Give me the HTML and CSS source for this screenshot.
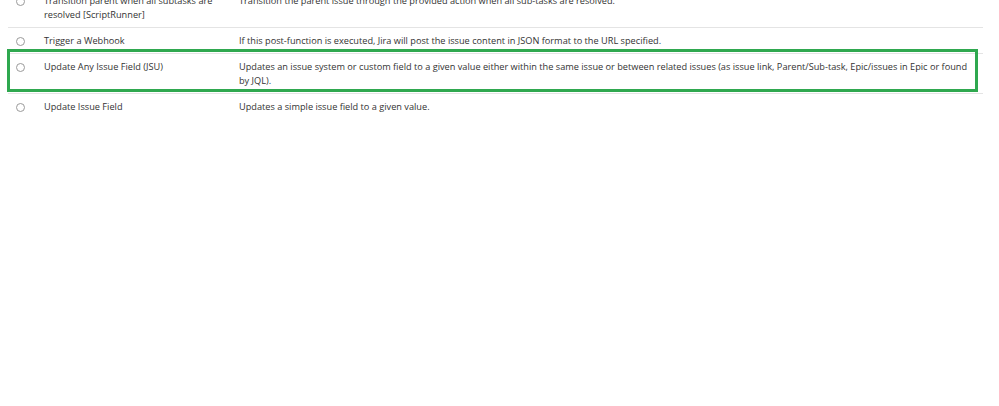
FILE: index.html
```html
<!DOCTYPE html>
<html lang="en">
<head>
  <meta charset="UTF-8" />
  <title>Post functions</title>
  <link rel="stylesheet" href="styles.css">
</head>
<body>
  <div class="fn-list">
    <!-- first row is scrolled partly out of view -->
    <div class="fn-row">
      <span class="radio"></span>
      <div class="fn-name">Transition parent when all subtasks are resolved [ScriptRunner]</div>
      <div class="fn-desc">Transition the parent issue through the provided action when all sub-tasks are resolved.</div>
    </div>
    <div class="fn-row">
      <span class="radio"></span>
      <div class="fn-name">Trigger a Webhook</div>
      <div class="fn-desc">If this post-function is executed, Jira will post the issue content in JSON format to the URL specified.</div>
    </div>
    <div class="fn-row marked">
      <span class="radio"></span>
      <div class="fn-name">Update Any Issue Field (JSU)</div>
      <div class="fn-desc">Updates an issue system or custom field to a given value either within the same issue or between related issues (as issue link, Parent/Sub-task, Epic/issues in Epic or found by JQL).</div>
    </div>
    <div class="fn-row">
      <span class="radio"></span>
      <div class="fn-name">Update Issue Field</div>
      <div class="fn-desc">Updates a simple issue field to a given value.</div>
    </div>
  </div>
</body>
</html>
```

FILE: styles.css
```css
*{box-sizing:border-box;margin:0;padding:0}
body{background:#fff;color:#333;font-family:"Open Sans",Arial,sans-serif;font-size:9.2px;line-height:14px}
.fn-list{margin:-12px 16px 0 8px}
.fn-row{display:flex;align-items:flex-start;padding:6px 0 5px;border-bottom:1px solid #e4e4e4}
.fn-row:last-child{border-bottom:none}
.radio{flex:none;width:9px;height:9px;margin:3px 0 0 8px;border:1px solid #9a9a9a;border-radius:50%}
.fn-name{flex:none;width:214px;padding:0 10px 0 19px}
.fn-desc{flex:1;padding-right:14px}

/* annotation box drawn over the screenshot */
.marked{position:relative}
.marked::after{content:"";position:absolute;left:-1px;right:5px;top:-5px;bottom:1px;border:3px solid #2fa84f}
```
